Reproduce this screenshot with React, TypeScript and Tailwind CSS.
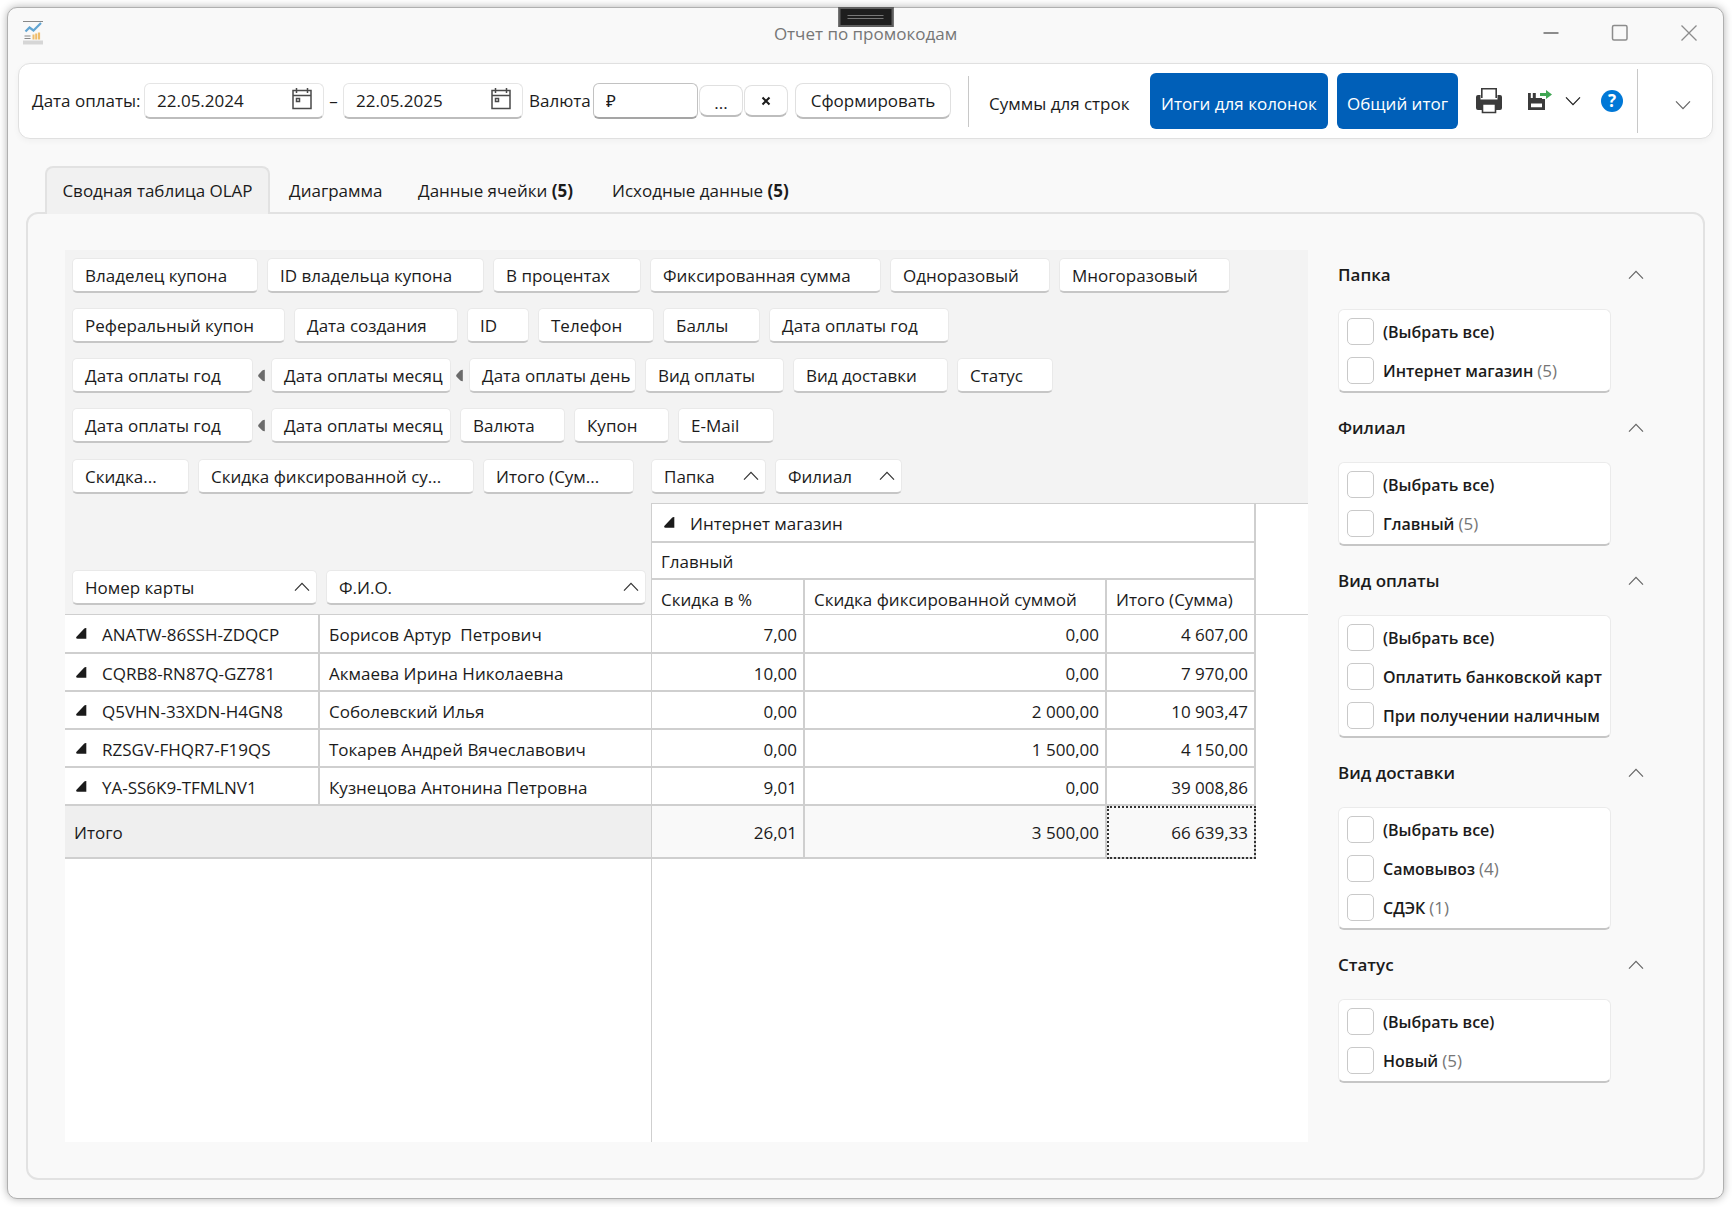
import React from "react";

type Chip = { label: string; w: string };

const rows: { chips: (Chip | null)[] }[] = [
  {
    chips: [
      { label: "Владелец купона", w: "w-[186px]" },
      { label: "ID владельца купона", w: "w-[217px]" },
      { label: "В процентах", w: "w-[148px]" },
      { label: "Фиксированная сумма", w: "w-[231px]" },
      { label: "Одноразовый", w: "w-[160px]" },
      { label: "Многоразовый", w: "w-[171px]" },
    ],
  },
  {
    chips: [
      { label: "Реферальный купон", w: "w-[213px]" },
      { label: "Дата создания", w: "w-[164px]" },
      { label: "ID", w: "w-[62px]" },
      { label: "Телефон", w: "w-[116px]" },
      { label: "Баллы", w: "w-[97px]" },
      { label: "Дата оплаты год", w: "w-[180px]" },
    ],
  },
  {
    chips: [
      { label: "Дата оплаты год", w: "w-[181px]" },
      null,
      { label: "Дата оплаты месяц", w: "w-[180px]" },
      null,
      { label: "Дата оплаты день", w: "w-[167px]" },
      { label: "Вид оплаты", w: "w-[139px]" },
      { label: "Вид доставки", w: "w-[155px]" },
      { label: "Статус", w: "w-[96px]" },
    ],
  },
  {
    chips: [
      { label: "Дата оплаты год", w: "w-[181px]" },
      null,
      { label: "Дата оплаты месяц", w: "w-[180px]" },
      { label: "Валюта", w: "w-[105px]" },
      { label: "Купон", w: "w-[95px]" },
      { label: "E-Mail", w: "w-[96px]" },
    ],
  },
];

const people = [
  ["ANATW-86SSH-ZDQCP", "Борисов Артур  Петрович", "7,00", "0,00", "4 607,00"],
  ["CQRB8-RN87Q-GZ781", "Акмаева Ирина Николаевна", "10,00", "0,00", "7 970,00"],
  ["Q5VHN-33XDN-H4GN8", "Соболевский Илья", "0,00", "2 000,00", "10 903,47"],
  ["RZSGV-FHQR7-F19QS", "Токарев Андрей Вячеславович", "0,00", "1 500,00", "4 150,00"],
  ["YA-SS6K9-TFMLNV1", "Кузнецова Антонина Петровна", "9,01", "0,00", "39 008,86"],
];

const filters: { title: string; items: [string, string?][] }[] = [
  { title: "Папка", items: [["Интернет магазин", "(5)"]] },
  { title: "Филиал", items: [["Главный", "(5)"]] },
  { title: "Вид оплаты", items: [["Оплатить банковской карт"], ["При получении наличным"]] },
  { title: "Вид доставки", items: [["Самовывоз", "(4)"], ["СДЭК", "(1)"]] },
  { title: "Статус", items: [["Новый", "(5)"]] },
];

function Chevron({ up = false, className = "" }: { up?: boolean; className?: string }) {
  return (
    <svg width="16" height="10" viewBox="0 0 16 10" fill="none" stroke="currentColor" strokeWidth="1.2" className={"shrink-0 " + className} aria-hidden="true">
      <path d={up ? "M1 8.700 8 1.300l7 7.400" : "M1 1.300 8 8.700l7-7.400"} />
    </svg>
  );
}

function Expander() {
  return (
    <button aria-label="Свернуть" className="flex shrink-0 pb-[3px]">
      <svg width="11" height="11" viewBox="0 0 11 11" aria-hidden="true">
        <path d="M8.300.6Q9.200-.1 10.300.1V10.700H1.500Q-.3 10.600.3 9Z" fill="#1b1b1b" />
      </svg>
    </button>
  );
}

function GroupArrow() {
  return (
    <svg width="8" height="14" viewBox="0 0 8 14" className="mx-[5px] shrink-0" aria-hidden="true">
      <path d="M6.800.8V12.200Q5 12 4.300 11.400L.6 7.800Q-.3 6.700.6 5.400L4.300 1.500Q5.500.8 6.800.8Z" fill="#6b6b6b" />
    </svg>
  );
}

function CalendarIcon() {
  return (
    <svg width="20" height="22" viewBox="0 0 20 22" fill="none" stroke="#4a4a4a" strokeWidth="1.500" aria-hidden="true">
      <path d="M1 2.500h18v18H1zM1 7.500h18M4.500 0v5M15.500 0v5" />
      <path d="M4.500 10.500h3v3h-3z" />
    </svg>
  );
}

function FieldChip({ label, w, sort = false }: Chip & { sort?: boolean }) {
  return (
    <button
      className={
        "flex h-[35px] shrink-0 items-center justify-between whitespace-pre rounded-[5px] border border-[#e9e9e9] border-b-2 border-b-[#c6c6c6] bg-white pl-3 pr-[6px] pt-[2px] text-left " + w
      }
    >
      {label}
      {sort && <Chevron up className="mb-[2px] text-[#333]" />}
    </button>
  );
}

function DateBox({ value, label }: { value: string; label: string }) {
  return (
    <div className="flex h-9 w-[180px] shrink-0 items-center rounded-md border border-[#e5e5e5] border-b-2 border-b-[#bdbdbd] bg-white pl-3 pr-[11px]">
      <input aria-label={label} defaultValue={value} className="w-0 flex-1 bg-transparent outline-none" />
      <button aria-label="Календарь" className="pb-1"><CalendarIcon /></button>
    </div>
  );
}

const softButton = "shrink-0 rounded-lg border border-[#e0e0e0] border-b-2 border-b-[#bdbdbd] bg-white";
const blueButton = "h-14 shrink-0 rounded-md bg-[#005fb8] pt-[6px] text-white whitespace-nowrap";
const line = "border-[#cfcfcf]";

export default function App() {
  return (
    <div className="flex min-h-screen bg-white pb-2 pl-[7px] pr-2 pt-[7px] font-['Open_Sans','Noto_Sans',sans-serif] text-[17px] leading-6 text-[#1b1b1b]">
      <div className="relative flex flex-1 flex-col rounded-[10px] border border-[#b0b0b0] bg-[#f9f9f9] shadow-[0_0_8px_rgba(0,0,0,0.3)]">
        <header className="mb-[6px] grid h-[49px] grid-cols-[1fr_auto_1fr] items-center">
          <div className="flex pl-[15px]">
            <svg width="20" height="24" viewBox="0 0 20 24" aria-hidden="true">
              <path d="M0 .5h20" stroke="#888" strokeWidth="1" />
              <path d="M2.500 10.500 6.500 6.500l4 3L18 2" fill="none" stroke="#62a5d2" strokeWidth="2.200" />
              <path d="M1.500 15h6M1.500 17.500h6" stroke="#888" strokeWidth="1" />
              <path d="M9.500 13.500h2v5h-2zM12.200 12.500h2v6h-2zM14.900 11.500h2.200v7h-2.200z" fill="#efbd6c" />
              <path d="M0 19.500h20v4H0z" fill="#d6d6d6" />
            </svg>
          </div>
          <h1 className="pt-[2px] text-[#767676]">Отчет по промокодам</h1>
          <div className="flex items-center justify-end gap-[49px] pr-6 text-[#8c8c8c]">
            <button aria-label="Свернуть окно">
              <svg width="20" height="20" viewBox="0 0 20 20" stroke="currentColor" strokeWidth="2"><path d="M2.500 10h15" /></svg>
            </button>
            <button aria-label="Развернуть окно">
              <svg width="20" height="20" viewBox="0 0 20 20" fill="none" stroke="currentColor" strokeWidth="1.500"><rect x="2.500" y="2.500" width="14.500" height="14.500" rx="1.500" /></svg>
            </button>
            <button aria-label="Закрыть">
              <svg width="20" height="20" viewBox="0 0 20 20" stroke="currentColor" strokeWidth="1.300"><path d="m2.500 2.500 15 15M17.500 2.500l-15 15" /></svg>
            </button>
          </div>
        </header>
        <div className="absolute left-1/2 top-[-1px] flex h-5 w-[55px] -translate-x-1/2 items-center justify-center border-2 border-[#5e5e5e] bg-[#1e1e1e]">
          <div className="h-1 w-9 border-y border-[#777]" />
        </div>

        <div className="mx-[10px] flex h-[76px] shrink-0 items-center rounded-xl border border-[#e0e0e0] bg-white pl-[13px] shadow-[0_2px_6px_rgba(0,0,0,0.04)]">
          <span className="w-28 shrink-0 whitespace-nowrap">Дата оплаты:</span>
          <DateBox value="22.05.2024" label="Дата оплаты с" />
          <span className="w-[19px] shrink-0 text-center">–</span>
          <DateBox value="22.05.2025" label="Дата оплаты по" />
          <label htmlFor="currency" className="ml-[6px] w-16 shrink-0 whitespace-nowrap">Валюта</label>
          <input id="currency" defaultValue="₽" className="h-9 w-[105px] shrink-0 rounded-md border border-[#c2c2c2] border-b-2 border-b-[#a5a5a5] bg-white px-3 outline-none" />
          <button className={softButton + " ml-px h-8 w-11 pt-1"}>...</button>
          <button aria-label="Очистить" className={softButton + " ml-px flex h-8 w-11 items-center justify-center"}>
            <svg width="10" height="10" viewBox="0 0 10 10" stroke="#1b1b1b" strokeWidth="2"><path d="m1.500 1.500 7 7M8.500 1.500l-7 7" /></svg>
          </button>
          <button className={softButton + " ml-[7px] h-9 w-[156px]"}>Сформировать</button>
          <div className="ml-[17px] h-[51px] w-px shrink-0 bg-[#c8c8c8]" />
          <button className="ml-5 h-14 w-[143px] shrink-0 whitespace-nowrap pt-[6px] text-left">Суммы для строк</button>
          <button className={blueButton + " ml-[18px] w-[178px]"}>Итоги для колонок</button>
          <button className={blueButton + " ml-[9px] w-[121px]"}>Общий итог</button>
          <button aria-label="Печать" className="ml-[17px] shrink-0">
            <svg width="28" height="28" viewBox="0 0 28 28" aria-hidden="true">
              <path d="M3 8h2.500v4.500h17V8H25q2 0 2 2v11q0 2-2 2H3q-2 0-2-2V10q0-2 2-2Z" fill="#3b3b3b" />
              <path d="M6.800 11V1.800h14.400V11" fill="#fff" stroke="#3b3b3b" strokeWidth="1.600" />
              <path d="M7.500 17h13v8.500h-13z" fill="#fff" stroke="#3b3b3b" strokeWidth="1.600" />
            </svg>
          </button>
          <button aria-label="Экспорт" className="ml-[25px] shrink-0 pb-[2px]">
            <svg width="24" height="20" viewBox="0 0 24 20" aria-hidden="true">
              <path d="M0 3h2.800v5h2V3h3v5H14V9h3v11H0zM3 13.500v3.800h11v-3.800z" fill="#3b3b3b" fillRule="evenodd" />
              <path d="M12 3h6V0l6 4.500L18 9V6h-6z" fill="#3fa653" />
            </svg>
          </button>
          <button aria-label="Варианты экспорта" className="ml-[13px] shrink-0"><Chevron /></button>
          <button aria-label="Справка" className="ml-5 flex size-[22px] shrink-0 items-center justify-center rounded-full bg-[#0078d7] font-bold text-white">?</button>
          <div className="ml-[14px] h-16 w-px shrink-0 bg-[#c8c8c8]" />
          <button aria-label="Ещё" className="ml-auto mr-[21px] mt-2 shrink-0 text-[#666]"><Chevron /></button>
        </div>

        <nav className="ml-[37px] mt-[27px] flex h-[46px] shrink-0" role="tablist">
          <button role="tab" aria-selected="true" className="z-10 h-12 w-[225px] whitespace-nowrap rounded-t-lg border-2 border-b-0 border-[#e2e2e2] bg-[#f1f1f1]">Сводная таблица OLAP</button>
          <button role="tab" aria-selected="false" className="ml-[19px] w-[129px] whitespace-nowrap pt-[3px] text-left">Диаграмма</button>
          <button role="tab" aria-selected="false" className="w-[194px] whitespace-nowrap pt-[3px] text-left">Данные ячейки <b>(5)</b></button>
          <button role="tab" aria-selected="false" className="whitespace-nowrap pt-[3px] text-left">Исходные данные <b>(5)</b></button>
        </nav>

        <main className="mx-[18px] mb-[18px] flex flex-1 rounded-xl border-2 border-[#e2e2e2] pb-9 pl-[37px] pt-9">
          <section className="flex min-w-0 flex-1 flex-col bg-white">
            <div className="flex flex-col bg-[#f3f3f3] px-[7px] pt-2">
              {rows.map((r, i) => (
                <div key={i} className="mb-[15px] flex items-center">
                  {r.chips.map((c, j) =>
                    c ? (
                      <div key={j} className={j > 0 && r.chips[j - 1] ? "ml-[9px]" : ""}>
                        <FieldChip {...c} />
                      </div>
                    ) : (
                      <GroupArrow key={j} />
                    ),
                  )}
                </div>
              ))}
              <div className="mb-[9px] mt-[1px] flex">
                <div className="flex w-[579px] gap-[9px]">
                  <FieldChip label="Скидка..." w="w-[117px]" />
                  <FieldChip label="Скидка фиксированной су..." w="w-[276px]" />
                  <FieldChip label="Итого (Сум..." w="w-[151px]" />
                </div>
                <div className="flex gap-[9px]">
                  <FieldChip label="Папка" w="w-[115px]" sort />
                  <FieldChip label="Филиал" w="w-[127px]" sort />
                </div>
              </div>
            </div>

            <table className="w-full table-fixed border-separate border-spacing-0">
              <colgroup>
                <col className="w-[255px]" />
                <col className="w-[332px]" />
                <col className="w-[153px]" />
                <col className="w-[302px]" />
                <col className="w-[149px]" />
                <col />
              </colgroup>
              <thead className="text-left">
                <tr className="h-[40px]">
                  <td colSpan={2} rowSpan={3} className={"border-b border-r bg-[#f3f3f3] pb-[9px] pl-[7px] align-bottom " + line}>
                    <div className="flex gap-[9px]">
                      <FieldChip label="Номер карты" w="w-[245px]" sort />
                      <FieldChip label="Ф.И.О." w="w-[320px]" sort />
                    </div>
                  </td>
                  <th colSpan={3} className={"border-b-2 border-r-2 border-t pl-3 pt-[3px] font-normal " + line}>
                    <div className="flex items-center gap-[15px]"><Expander />Интернет магазин</div>
                  </th>
                  <td rowSpan={3} className={"border-b border-t " + line} />
                </tr>
                <tr className="h-[37px]">
                  <th colSpan={3} className={"border-b-2 border-r-2 pl-[9px] pt-[3px] font-normal " + line}>Главный</th>
                </tr>
                <tr className="h-[35px]">
                  {["Скидка в %", "Скидка фиксированной суммой", "Итого (Сумма)"].map((h) => (
                    <th key={h} className={"whitespace-nowrap border-b border-r-2 pl-[9px] pt-[5px] font-normal " + line}>{h}</th>
                  ))}
                </tr>
              </thead>
              <tbody>
                {people.map((p, r) => (
                  <tr key={p[0]} className={r ? "h-[38px]" : "h-[39px]"}>
                    <td className={"border-b-2 border-r-2 pl-[11px] pt-[3px] " + line}>
                      <div className="flex items-center gap-[15px] whitespace-nowrap"><Expander />{p[0]}</div>
                    </td>
                    <td className={"whitespace-pre border-b-2 border-r pl-[9px] pt-[3px] " + line}>{p[1]}</td>
                    {p.slice(2).map((n, i) => (
                      <td key={i} className={"border-b-2 border-r-2 pr-[6px] pt-[3px] text-right " + line}>{n}</td>
                    ))}
                  </tr>
                ))}
                <tr className="h-[53px]">
                  <td colSpan={2} className={"border-b-2 border-r bg-[#efefef] pl-[9px] pt-[2px] " + line}>Итого</td>
                  <td className={"border-b-2 border-r-2 bg-[#f9f9f9] pr-[6px] pt-[2px] text-right " + line}>26,01</td>
                  <td className={"border-b-2 border-r-2 bg-[#f9f9f9] pr-[6px] pt-[2px] text-right " + line}>3 500,00</td>
                  <td className={"border-b-2 border-r-2 bg-[#f9f9f9] pr-[6px] pt-[2px] text-right outline-2 -outline-offset-2 outline-dotted outline-[#333] " + line}>66 639,33</td>
                </tr>
              </tbody>
            </table>
            <div className={"w-[587px] flex-1 border-r " + line} />
          </section>

          <aside className="w-[395px] shrink-0 pl-[30px]">
            {filters.map((f, i) => (
              <section key={f.title}>
                <h2 className={"flex w-[306px] items-center justify-between font-semibold " + (i ? "h-[69px]" : "mb-[10px] h-[49px]")}>
                  {f.title}
                  <button aria-label={"Свернуть " + f.title} className="text-[#666]"><Chevron up /></button>
                </h2>
                <div className="flex w-[273px] flex-col gap-3 rounded-md border border-[#ebebeb] border-b-2 border-b-[#c6c6c6] bg-white pb-[7px] pl-2 pr-px pt-2">
                  {([["(Выбрать все)"], ...f.items] as [string, string?][]).map(([t, n]) => (
                    <label key={t} className="flex h-[27px] items-center whitespace-nowrap text-[16px] font-semibold">
                      <input type="checkbox" className="mr-[9px] size-[27px] shrink-0 appearance-none rounded-[5px] border border-[#c9c9c9] bg-white" />
                      {t}
                      {n && <span className="ml-1 text-[17px] font-normal text-[#767676]">{n}</span>}
                    </label>
                  ))}
                </div>
              </section>
            ))}
          </aside>
        </main>
      </div>
    </div>
  );
}
